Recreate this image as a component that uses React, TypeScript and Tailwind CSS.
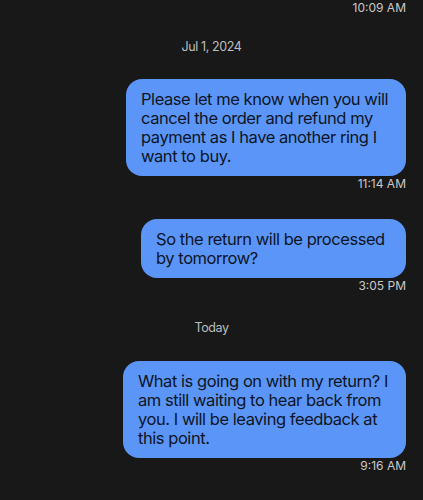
const font = { fontFamily: "Inter, 'Noto Sans', sans-serif" };

type Msg = { text: string; time: string; width: string };

function Bubble({ text, time, width }: Msg) {
  return (
    <div className="flex flex-col items-end pr-[17px]">
      <div
        className={`${width} rounded-[16px] bg-[#5b95f8] pl-[15px] pr-[10px] pt-[11px] pb-[10px] text-[16.5px] leading-[19px] tracking-[-0.45px] text-[#0d1526]`}
      >
        {text}
      </div>
      <div className="text-[12px] leading-[16px] text-[#c9c9c9]">{time}</div>
    </div>
  );
}

function DateLabel({ label }: { label: string }) {
  return (
    <div className="text-center text-[12.5px] leading-[16px] tracking-[-0.4px] text-[#bdbdbd]">{label}</div>
  );
}

export default function App() {
  return (
    <div className="h-[500px] w-[423px] overflow-hidden bg-[#181818]" style={font}>
      <div className="pr-[17px] text-right text-[12px] leading-[16px] text-[#c9c9c9]">10:09 AM</div>
      <div className="mt-[23px]">
        <DateLabel label="Jul 1, 2024" />
      </div>
      <div className="mt-[24px]">
        <Bubble
          width="w-[280px]"
          text="Please let me know when you will cancel the order and refund my payment as I have another ring I want to buy."
          time="11:14 AM"
        />
      </div>
      <div className="mt-[27px]">
        <Bubble width="w-[265px]" text="So the return will be processed by tomorrow?" time="3:05 PM" />
      </div>
      <div className="mt-[26px]">
        <DateLabel label="Today" />
      </div>
      <div className="mt-[25px]">
        <Bubble
          width="w-[283px]"
          text="What is going on with my return? I am still waiting to hear back from you. I will be leaving feedback at this point."
          time="9:16 AM"
        />
      </div>
    </div>
  );
}
